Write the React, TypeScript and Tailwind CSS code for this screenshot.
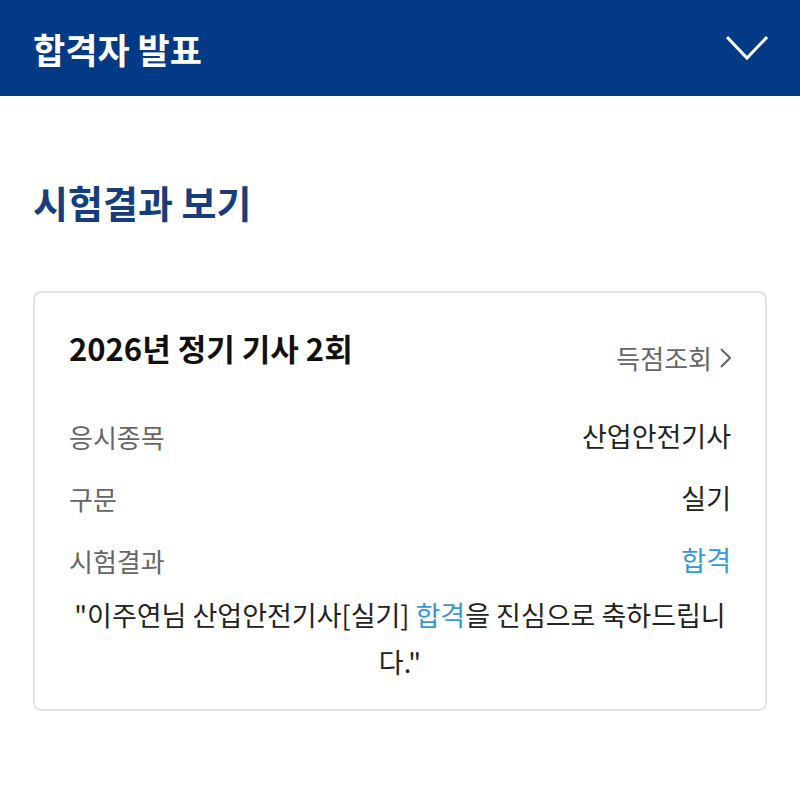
import React from 'react';

const font = { fontFamily: '"Noto Sans CJK KR", "Noto Sans", sans-serif' };

const rows = [
  { label: '응시종목', value: '산업안전기사', blue: false },
  { label: '구문', value: '실기', blue: false },
  { label: '시험결과', value: '합격', blue: true },
];

const App: React.FC = () => {
  return (
    <div className="min-h-[800px] bg-white" style={font}>
      <header className="flex h-[96px] items-center justify-between bg-[#033a86] pl-[33px] pr-[32px]">
        <h1 className="text-[35px] font-bold leading-none text-white">합격자 발표</h1>
        <svg className="h-[26px] w-[42px]" viewBox="0 0 42 26" fill="none" stroke="white" strokeWidth={3}>
          <path d="M1 2 L21 23 L41 2" />
        </svg>
      </header>

      <div className="px-[33px]">
        <h2 className="pt-[84px] text-[38px] font-bold leading-[44px] text-[#173d7c]">시험결과 보기</h2>

        <div className="mt-[67px] rounded-[8px] border-2 border-[#e3e3e3] px-[34px] pb-[24px] pt-[37px]">
          <div className="flex items-start justify-between">
            <div className="text-[31px] font-semibold leading-[36px] text-[#111]">2026년 정기 기사 2회</div>
            <div className="mt-[10px] flex items-center gap-[8px] text-[26px] leading-[36px] text-[#666]">
              득점조회
              <svg className="h-[20px] w-[11px]" viewBox="0 0 11 20" fill="none" stroke="#666" strokeWidth={2}>
                <path d="M1 1 L10 10 L1 19" />
              </svg>
            </div>
          </div>

          <div className="mt-[29px]">
            {rows.map((r) => (
              <div key={r.label} className="flex h-[62px] items-center justify-between">
                <span className="text-[26px] text-[#666]">{r.label}</span>
                <span className={r.blue ? 'text-[27px] text-[#3a97d6]' : 'text-[27px] text-[#222]'}>{r.value}</span>
              </div>
            ))}
          </div>

          <p className="text-center text-[27px] leading-[47px] text-[#222]">
            "이주연님 산업안전기사[실기] <span className="text-[#3a97d6]">합격</span>을 진심으로 축하드립니다."
          </p>
        </div>
      </div>
    </div>
  );
};

export default App;
